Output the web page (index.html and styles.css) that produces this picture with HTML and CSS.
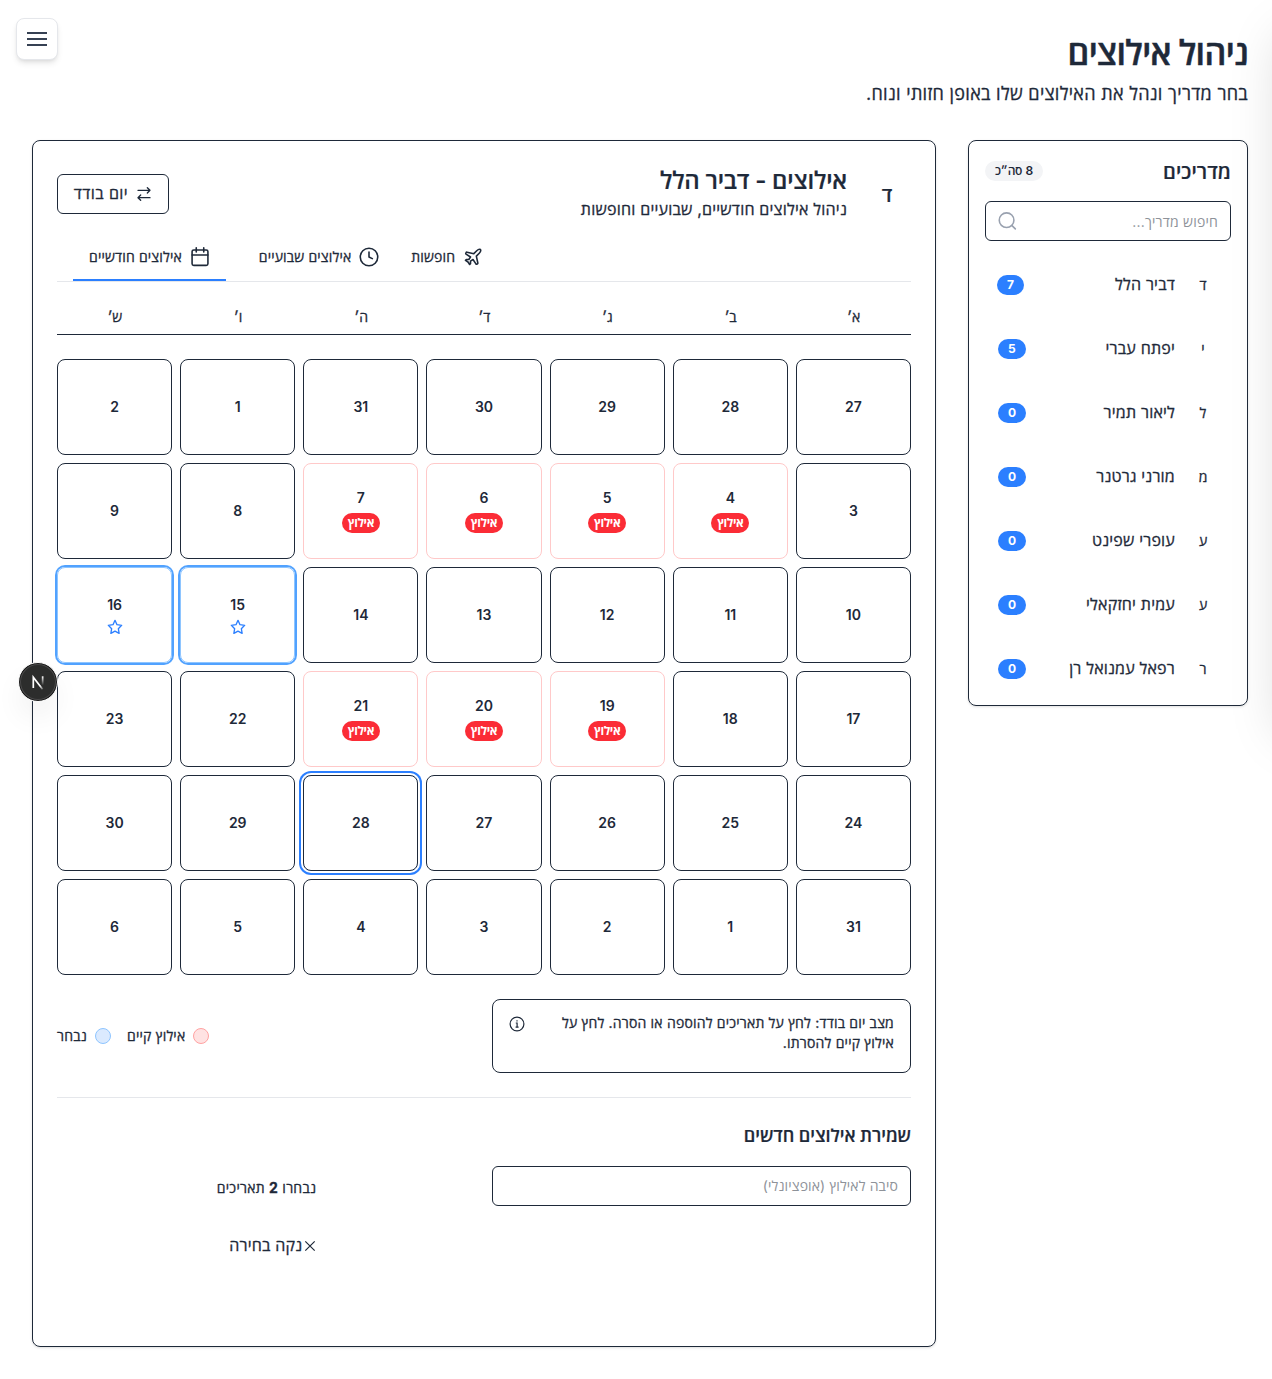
FILE: index.html
```html
<!DOCTYPE html>
<html lang="he" dir="rtl">
<head>
<meta charset="utf-8">
<title>ניהול אילוצים</title>
<link rel="stylesheet" href="styles.css">
</head>
<body>
<div class="drawer"></div>
<button class="menu-button" aria-label="תפריט">
  <svg width="24" height="24" viewBox="0 0 24 24"><path d="M2 5h20M2 11h20M2 17h20" fill="none" stroke="#364153" stroke-width="2"/></svg>
</button>
<main class="page">
  <header class="page-header">
    <h1>ניהול אילוצים</h1>
    <p>בחר מדריך ונהל את האילוצים שלו באופן חזותי ונוח.</p>
  </header>
  <div class="columns">
    <aside class="card guides">
      <div class="guides-head">
        <h2>מדריכים</h2>
        <span class="total">8 סה״כ</span>
      </div>
      <div class="search">
        <input type="text" placeholder="חיפוש מדריך...">
        <svg width="20" height="20" viewBox="0 0 24 24" class="line"><circle cx="11.500" cy="11" r="8.800"/><path d="m18 17.500 4 4"/></svg>
      </div>
      <ul class="guide-list">
        <li><span class="initial">ד</span><span class="name">דביר הלל</span><span class="count">7</span></li>
        <li><span class="initial">י</span><span class="name">יפתח עברי</span><span class="count">5</span></li>
        <li><span class="initial">ל</span><span class="name">ליאור תמיר</span><span class="count">0</span></li>
        <li><span class="initial">מ</span><span class="name">מורני גרטנר</span><span class="count">0</span></li>
        <li><span class="initial">ע</span><span class="name">עופרי שפינט</span><span class="count">0</span></li>
        <li><span class="initial">ע</span><span class="name">עמית יחזקאלי</span><span class="count">0</span></li>
        <li><span class="initial">ר</span><span class="name">רפאל עמנואל רן</span><span class="count">0</span></li>
      </ul>
    </aside>
    <section class="card detail">
      <div class="detail-head">
        <span class="avatar">ד</span>
        <div class="detail-title">
          <h2>אילוצים - דביר הלל</h2>
          <p>ניהול אילוצים חודשיים, שבועיים וחופשות</p>
        </div>
        <button class="mode">
          <svg width="16" height="16" viewBox="0 0 24 24" class="line"><path d="m17 2.500 4 4-4 4M3 6.500h18M7 21.500l-4-4 4-4M21 17.500H3"/></svg>
          <span>יום בודד</span>
        </button>
      </div>
      <nav class="tabs">
        <a class="tab"><svg width="20" height="20" viewBox="0 0 24 24" class="line"><path d="M17.800 19.200 16 11l3.500-3.500C21 6 21.500 4 21 3c-1-.5-3 0-4.500 1.500L13 8 4.800 6.200c-.5-.1-.9.1-1.100.5l-.3.500c-.2.500-.1 1 .3 1.300L9 12l-2 3H4l-1 1 3 2 2 3 1-1v-3l3-2 3.500 5.300c.3.400.8.500 1.300.2l.5-.2c.4-.3.6-.7.5-1.200z"/></svg><span>חופשות</span></a>
        <a class="tab"><svg width="20" height="20" viewBox="0 0 24 24" class="line"><circle cx="12" cy="12" r="10.500"/><path d="M12 6v6l4 2"/></svg><span>אילוצים שבועיים</span></a>
        <a class="tab active"><svg width="20" height="20" viewBox="0 0 24 24" class="line"><rect x="2.500" y="3.500" width="19" height="18.500" rx="2"/><path d="M7.500 1v5M16.500 1v5M2.500 9.500h19"/></svg><span>אילוצים חודשיים</span></a>
      </nav>
      <div class="weekdays"><span>א׳</span><span>ב׳</span><span>ג׳</span><span>ד׳</span><span>ה׳</span><span>ו׳</span><span>ש׳</span></div>
      <div class="calendar" id="calendar"></div>
      <div class="notes">
        <div class="hint">
          <p>מצב יום בודד: לחץ על תאריכים להוספה או הסרה. לחץ על<br>אילוץ קיים להסרתו.</p>
          <svg width="16" height="16" viewBox="0 0 16 16" class="info"><circle cx="8" cy="8" r="6.900"/><path d="M6.800 7h1.300v4.200M6.600 11.200h3M8 4.300v1.300"/></svg>
        </div>
        <div class="legend">
          <span class="key"><i class="dot red"></i><span>אילוץ קיים</span></span>
          <span class="key"><i class="dot blue"></i><span>נבחר</span></span>
        </div>
      </div>
      <div class="save">
        <h3>שמירת אילוצים חדשים</h3>
        <div class="save-grid">
          <input type="text" placeholder="סיבה לאילוץ (אופציונלי)">
          <div class="selection">
            <div>
              <p>נבחרו <b>2</b> תאריכים</p>
              <button class="clear"><svg width="12" height="12" viewBox="0 0 12 12"><path d="m1.300 1.300 9.400 9.400M10.700 1.300 1.300 10.700" fill="none" stroke="currentColor" stroke-width="1.200"/></svg><span>נקה בחירה</span></button>
            </div>
          </div>
        </div>
      </div>
    </section>
  </div>
</main>
<div class="dev-badge">
  <svg width="40" height="40" viewBox="0 0 40 40">
    <defs>
      <linearGradient id="diag" gradientUnits="userSpaceOnUse" x1="17" y1="17" x2="26" y2="28"><stop offset=".6" stop-color="#fff"/><stop offset="1" stop-color="#fff" stop-opacity="0"/></linearGradient>
      <linearGradient id="stem" x1="0" y1="0" x2="0" y2="1"><stop stop-color="#fff"/><stop offset="1" stop-color="#fff" stop-opacity="0"/></linearGradient>
    </defs>
    <path d="M15.300 26V15.300L24.600 27.300" fill="none" stroke="url(#diag)" stroke-width="1.700"/>
    <rect x="23.800" y="14.300" width="1.700" height="9" fill="url(#stem)"/>
  </svg>
</div>
<script src="calendar.js"></script>
</body>
</html>
```

FILE: styles.css
```css
* { box-sizing: border-box; margin: 0; padding: 0; }
body { position: relative; min-height: 1379px; overflow-x: hidden; background: #fff; color: #1e2939; font-family: Inter, "Open Sans", "Noto Sans", sans-serif; font-size: 16px; line-height: 24px; }
button, input { font: inherit; color: inherit; background: none; letter-spacing: inherit; }
h1, h2, h3 { font-weight: 600; }
h1, h2, h3, p, span { white-space: nowrap; }
ul { list-style: none; }
svg { display: block; flex: none; }
.line { fill: none; stroke: currentColor; stroke-width: 2; stroke-linecap: round; stroke-linejoin: round; }

p, .name, .initial, .mode, .tab span, .weekdays, .key, .clear { -webkit-text-stroke: .3px currentColor; }
h2, h3, .avatar { -webkit-text-stroke: .2px currentColor; }

.drawer { position: absolute; top: 0; left: 100%; width: 256px; height: 720px; box-shadow: 0 25px 50px -12px rgba(0,0,0,.17); }
.menu-button { position: absolute; top: 18px; left: 16px; width: 42px; height: 42px; padding: 8px; border: 1px solid #e5e7eb; border-radius: 8px; background: #fff; box-shadow: 0 4px 6px -1px rgba(0,0,0,.1), 0 2px 4px -2px rgba(0,0,0,.1); }
.menu-button svg { margin-top: 1px; }

.page { padding: 32px 24px 32px 32px; }
.page-header { height: 108px; }
.page-header h1 { padding-top: 1px; font-size: 34px; line-height: 39px; letter-spacing: -.65px; -webkit-text-stroke: .5px currentColor; }
.page-header p { margin-top: 8px; font-size: 18px; line-height: 28px; letter-spacing: .3px; }
.columns { display: grid; grid-template-columns: 280px 904px; gap: 32px; align-items: start; }
.card { border: 1px solid #1e2939; border-radius: 8px; box-shadow: 0 1px 3px rgba(0,0,0,.1), 0 1px 2px -1px rgba(0,0,0,.1); }

.guides { padding: 16px 16px 8px; }
.guides-head { display: flex; justify-content: space-between; align-items: center; height: 28px; }
.guides-head h2 { padding-top: 1px; font-size: 20px; line-height: 28px; letter-spacing: .1px; }
.total { height: 20px; padding: 0 10px; border-radius: 10px; background: #f3f4f6; font-size: 12px; line-height: 20px; font-weight: 600; letter-spacing: -.4px; word-spacing: 1px; }
.search { display: flex; align-items: center; justify-content: space-between; height: 40px; margin-top: 16px; padding: 0 12px 0 11px; border: 1px solid #1e2939; border-radius: 6px; }
.search input { flex: 1; min-width: 0; padding-top: 2px; border: 0; font-size: 14px; letter-spacing: .2px; }
.search svg { color: #99a1af; stroke-width: 1.900; }
::placeholder { color: #8e9299; opacity: 1; }
.guide-list { display: grid; gap: 8px; margin-top: 16px; }
.guide-list li { display: flex; align-items: center; height: 56px; padding: 0 12px; gap: 12px; }
.guide-list li + li { padding-left: 13px; }
.initial { width: 32px; text-align: center; font-size: 14px; }
.name { padding-bottom: 2px; letter-spacing: .2px; }
.count { height: 20px; margin-inline-start: auto; padding: 0 10px; border-radius: 10px; background: #2b7fff; color: #fff; font-size: 12px; line-height: 20px; font-weight: 700; }

.detail { height: 1207px; padding: 24px; }
.detail-head { display: flex; align-items: center; gap: 16px; height: 56px; }
.avatar { width: 48px; padding-top: 3px; text-align: center; font-size: 20px; font-weight: 600; }
.detail-title h2 { font-size: 24px; line-height: 32px; letter-spacing: -.17px; }
.detail-title p { letter-spacing: .21px; }
.mode { display: flex; align-items: center; gap: 8px; width: 112px; height: 40px; margin: 2px auto 0 0; padding: 0 16px 2px; border: 1px solid #1e2939; border-radius: 6px; letter-spacing: .4px; }
.mode svg { margin-top: 2px; }
.tabs { display: flex; justify-content: flex-end; height: 61px; padding-left: 16px; border-bottom: 1px solid #e5e7eb; }
.tab { display: flex; align-items: center; gap: 8px; height: 48px; margin-top: 12px; padding: 2px 16px 0; border-bottom: 2px solid transparent; font-size: 14px; letter-spacing: .15px; }
.tab svg { stroke-width: 1.900; }
.tab.active { margin-right: 17px; border-color: #2b7fff; }
.weekdays { display: grid; grid-template-columns: repeat(7, 1fr); gap: 8px; margin-top: 24px; height: 29px; border-bottom: 1px solid #1e2939; text-align: center; font-size: 14px; line-height: 21px; letter-spacing: -.5px; }
.calendar { display: grid; grid-template-columns: repeat(7, 1fr); grid-auto-rows: 96px; gap: 8px; margin-top: 24px; }
.day { display: flex; flex-direction: column; align-items: center; justify-content: center; gap: 4px; border: 1px solid #1e2939; border-radius: 8px; font-size: 14px; line-height: 20px; font-weight: 600; }
.day.blocked { gap: 5px; padding-bottom: 2px; border-color: #ffc9c9; }
.day.picked { border-color: #8ec5ff; box-shadow: 0 0 0 2px #51a2ff; }
.day.picked svg { color: #2b7fff; }
.day.today { box-shadow: 0 0 0 2px #fff, 0 0 0 4px #2b7fff; }
.tag { height: 20px; padding: 0 6px; border-radius: 10px; background: #fb2c36; color: #fff; font-size: 12px; line-height: 20px; font-weight: 700; letter-spacing: -.4px; }
.notes { display: grid; grid-template-columns: 1fr 1fr; gap: 16px; align-items: center; margin-top: 24px; padding-bottom: 24px; border-bottom: 1px solid #e5e7eb; }
.hint { display: flex; justify-content: space-between; height: 74px; padding: 13px 16px; border: 1px solid #1e2939; border-radius: 8px; font-size: 14px; line-height: 20px; letter-spacing: .19px; }
.info { margin-top: 3px; fill: none; stroke: currentColor; stroke-width: 1.200; }
.legend { display: flex; justify-content: flex-end; gap: 16px; font-size: 14px; line-height: 20px; letter-spacing: .2px; }
.key { display: flex; align-items: center; gap: 8px; }
.dot { width: 16px; height: 16px; border: 1px solid; border-radius: 50%; }
.dot.red { border-color: #ffa2a2; background: #ffe2e2; }
.dot.blue { border-color: #8ec5ff; background: #dbeafe; }
.save { padding-top: 24px; }
.save h3 { font-size: 18px; line-height: 28px; letter-spacing: -.05px; }
.save-grid { display: grid; grid-template-columns: 1fr 1fr; gap: 16px; margin-top: 16px; }
.save-grid input { height: 40px; padding: 0 12px 2px; border: 1px solid #1e2939; border-radius: 6px; font-size: 14px; letter-spacing: .12px; }
.selection { display: flex; justify-content: center; padding-top: 12px; font-size: 14px; line-height: 20px; letter-spacing: .25px; }
.clear { display: flex; align-items: center; gap: 2px; height: 40px; margin-top: 27px; border: 0; font-size: 16px; letter-spacing: .2px; }
.clear svg { margin-top: 1px; }
.dev-badge { position: absolute; left: 18px; top: 662px; width: 40px; height: 40px; border: 1px solid #fff; border-radius: 50%; background: #2c2d2c; box-shadow: inset 0 0 0 1px #171717, inset 0 0 0 2px #4a4a4a, 0 16px 32px -8px rgba(0,0,0,.14); }
.dev-badge svg { margin: -1px; }
```

FILE: calendar.js
```js
const days = [27, 28, 29, 30, 31, 1, 2, ...Array.from({ length: 28 }, (_, i) => i + 3), 31, 1, 2, 3, 4, 5, 6];
const blocked = [4, 5, 6, 7, 19, 20, 21];
const picked = [15, 16];
const star = '<svg width="16" height="16" viewBox="0 0 24 24" class="line"><path d="m12 2 3 6.500 7 1-5 5 1.200 7L12 18.200 5.800 21.500l1.200-7-5-5 7-1z"/></svg>';
const grid = document.getElementById("calendar");
days.forEach((day, i) => {
  const current = i >= 5 && i <= 35;
  const cell = document.createElement("div");
  cell.className = "day";
  cell.innerHTML = `<span>${day}</span>`;
  if (current && blocked.includes(day)) {
    cell.classList.add("blocked");
    cell.innerHTML += '<span class="tag">אילוץ</span>';
  }
  if (current && picked.includes(day)) {
    cell.classList.add("picked");
    cell.innerHTML += star;
  }
  if (current && day === 28) cell.classList.add("today");
  grid.append(cell);
});
```
